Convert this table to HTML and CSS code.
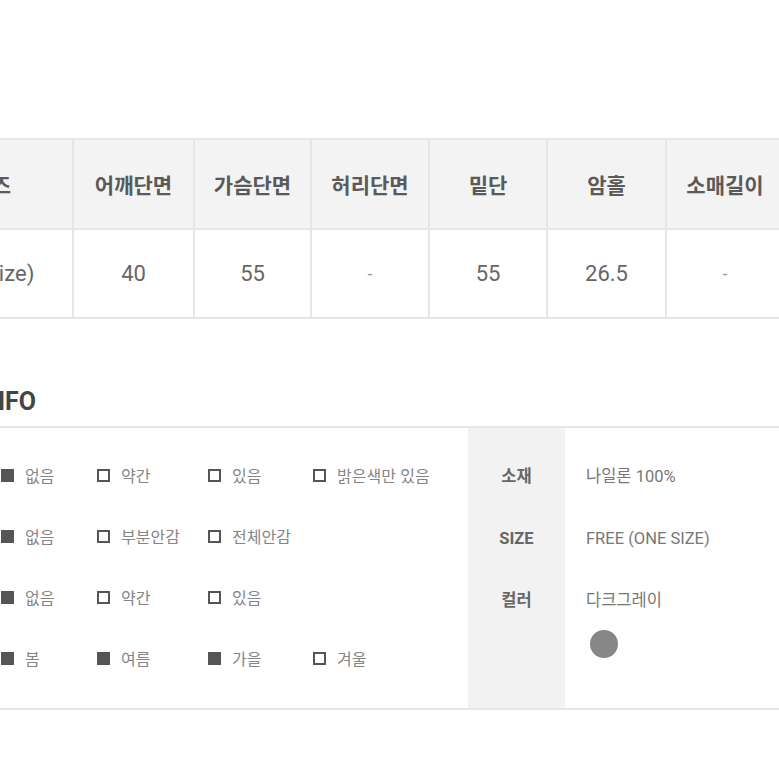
FILE: index.html
```html
<!DOCTYPE html>
<html lang="ko">
<head>
<meta charset="utf-8">
<title>상품 정보</title>
<link rel="stylesheet" href="styles.css">
</head>
<body>
<div class="page">
  <table class="size-table">
    <colgroup>
      <col class="c-first"><col class="c121"><col class="c117"><col class="c118"><col class="c118"><col class="c119"><col class="c118">
    </colgroup>
    <tr class="head">
      <th>사이즈</th><th>어깨단면</th><th>가슴단면</th><th>허리단면</th><th>밑단</th><th>암홀</th><th>소매길이</th>
    </tr>
    <tr class="data">
      <td class="first">Free(one size)</td><td>40</td><td>55</td><td class="dash">-</td><td>55</td><td>26.5</td><td class="dash">-</td>
    </tr>
  </table>

  <h2 class="info-title">INFO</h2>

  <div class="info">
    <div class="opts">
      <div class="opt-row">
        <span class="opt"><i class="box on"></i>없음</span>
        <span class="opt"><i class="box"></i>약간</span>
        <span class="opt"><i class="box"></i>있음</span>
        <span class="opt"><i class="box"></i>밝은색만 있음</span>
      </div>
      <div class="opt-row">
        <span class="opt"><i class="box on"></i>없음</span>
        <span class="opt"><i class="box"></i>부분안감</span>
        <span class="opt"><i class="box"></i>전체안감</span>
      </div>
      <div class="opt-row">
        <span class="opt"><i class="box on"></i>없음</span>
        <span class="opt"><i class="box"></i>약간</span>
        <span class="opt"><i class="box"></i>있음</span>
      </div>
      <div class="opt-row">
        <span class="opt"><i class="box on"></i>봄</span>
        <span class="opt"><i class="box on"></i>여름</span>
        <span class="opt"><i class="box on"></i>가을</span>
        <span class="opt"><i class="box"></i>겨울</span>
      </div>
    </div>
    <div class="spec-labels">
      <div class="lbl">소재</div>
      <div class="lbl">SIZE</div>
      <div class="lbl">컬러</div>
    </div>
    <div class="spec-values">
      <div class="val">나일론 100%</div>
      <div class="val">FREE (ONE SIZE)</div>
      <div class="val">다크그레이</div>
      <div class="swatch"></div>
    </div>
  </div>
</div>
</body>
</html>
```

FILE: styles.css
```css
html, body {
  margin: 0;
  padding: 0;
  background: #ffffff;
  overflow: hidden;
}

.page {
  width: 779px;
  overflow: hidden;
  padding-top: 138px;
  font-family: "Roboto", "Noto Sans CJK KR", sans-serif;
}

/* size table */
.size-table {
  margin-left: -110px;
  width: 893px;
  table-layout: fixed;
  border-collapse: collapse;
}
.c-first { width: 182px; }
.c121 { width: 121px; }
.c117 { width: 117px; }
.c118 { width: 118px; }
.c119 { width: 119px; }

.size-table th,
.size-table td {
  border: 2px solid #e6e6e6;
  text-align: center;
  vertical-align: middle;
  padding: 0;
}
.size-table .head th {
  height: 88px;
  background: #f3f3f3;
  font-family: "Noto Sans CJK KR", sans-serif;
  font-size: 21px;
  font-weight: 700;
  color: #5a5a5a;
}
.size-table .data td {
  height: 87px;
  font-size: 22px;
  color: #666666;
}
.size-table .data td.first {
  padding-right: 34px;
}
.size-table .data td.dash {
  color: #9a9a9a;
  font-size: 18px;
}

/* info heading */
.info-title {
  margin: 68px 0 10px -20px;
  font-size: 25px;
  line-height: 29px;
  font-weight: 700;
  color: #444444;
}

/* info body */
.info {
  margin-left: -110px;
  display: grid;
  grid-template-columns: 578px 97px 1fr;
  border-top: 2px solid #e6e6e6;
  border-bottom: 2px solid #e6e6e6;
}

.opts {
  padding: 36px 0 39px 111px;
  display: flex;
  flex-direction: column;
  gap: 39px;
}
.opt-row {
  display: grid;
  grid-template-columns: 96px 111px 105px 1fr;
  height: 22px;
  align-items: center;
}
.opt {
  display: flex;
  align-items: center;
  font-family: "Noto Sans CJK KR", sans-serif;
  font-size: 16px;
  line-height: 22px;
  color: #858585;
  white-space: nowrap;
}
.box {
  display: block;
  width: 13px;
  height: 13px;
  box-sizing: border-box;
  border: 2px solid #555555;
  background: #ffffff;
  margin-right: 11px;
  flex: none;
}
.box.on {
  background: #555555;
}

.spec-labels {
  background: #f2f2f2;
  padding-top: 38px;
  display: flex;
  flex-direction: column;
  gap: 40px;
}
.lbl {
  height: 22px;
  line-height: 22px;
  text-align: center;
  font-size: 16.5px;
  font-weight: 700;
  color: #666666;
}

.spec-values {
  padding: 38px 0 0 21px;
  display: flex;
  flex-direction: column;
  gap: 40px;
}
.val {
  height: 22px;
  line-height: 22px;
  font-size: 16.5px;
  color: #777777;
  white-space: nowrap;
}
.swatch {
  width: 28px;
  height: 28px;
  border-radius: 50%;
  background: #868686;
  margin: -22px 0 0 4px;
}
```
